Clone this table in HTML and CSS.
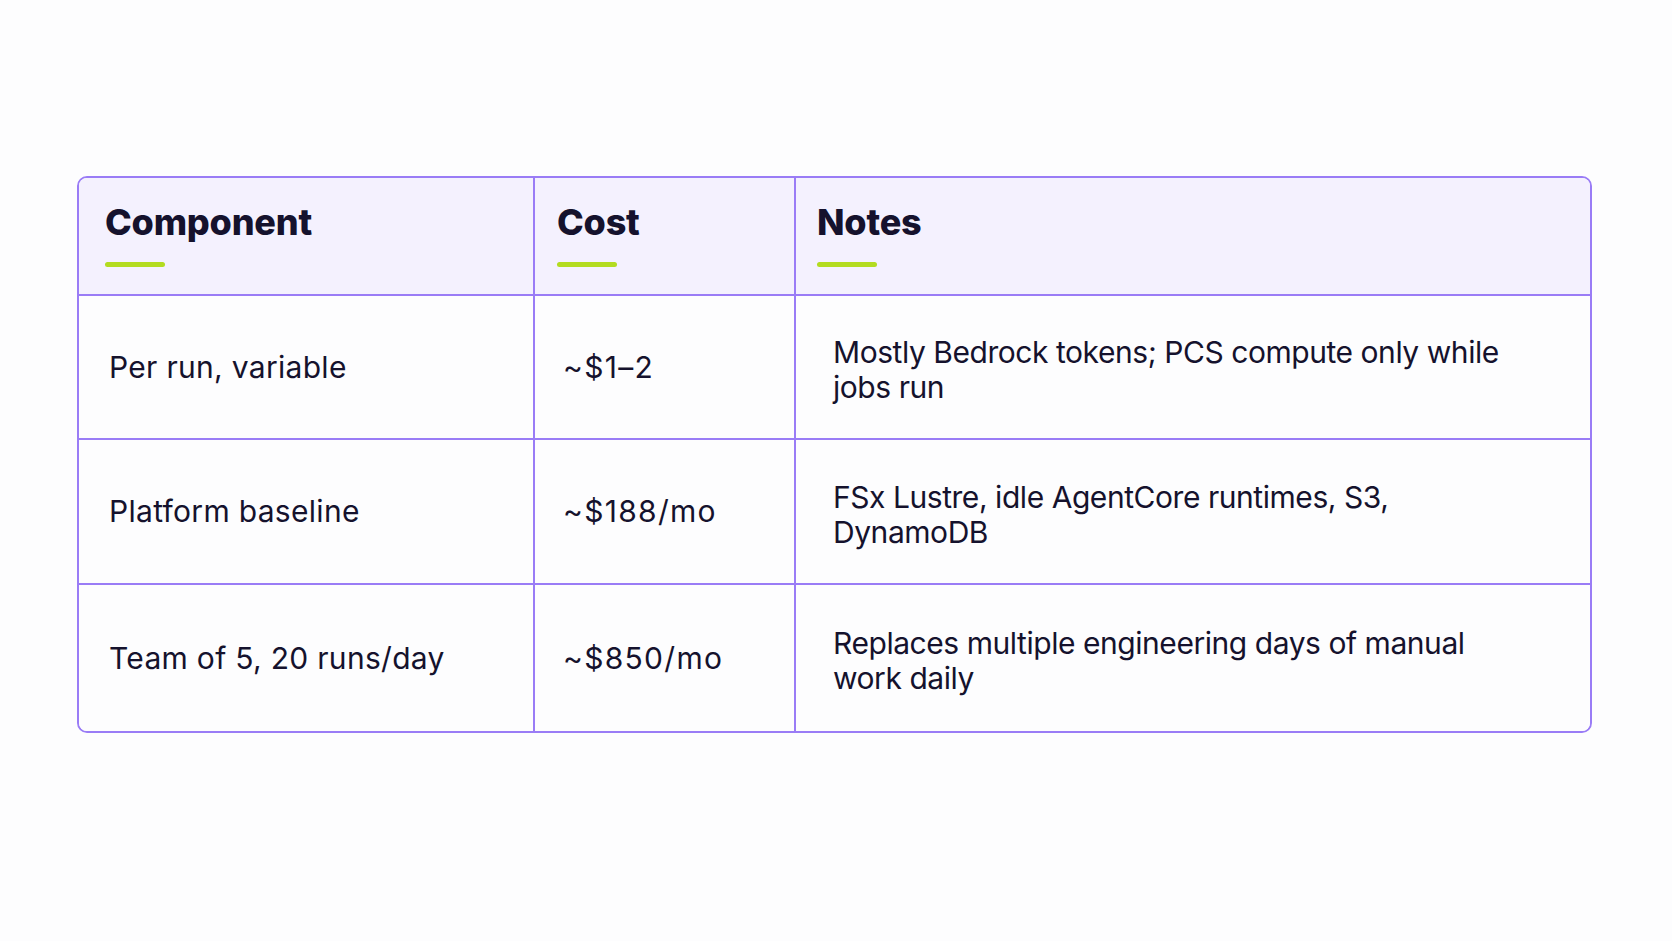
FILE: index.html
```html
<!DOCTYPE html>
<html lang="en">
<head>
<meta charset="utf-8">
<title>Cost table</title>
<link rel="stylesheet" href="styles.css">
</head>
<body>
<main class="page">
  <div class="table">
    <div class="cell head c1"><span class="head-text">Component</span><span class="bar"></span></div>
    <div class="cell head c2"><span class="head-text">Cost</span><span class="bar"></span></div>
    <div class="cell head c3 last"><span class="head-text">Notes</span><span class="bar"></span></div>

    <div class="cell body c1">Per run, variable</div>
    <div class="cell body c2">~$1–2</div>
    <div class="cell body c3 last notes">Mostly Bedrock tokens; PCS compute only while jobs run</div>

    <div class="cell body c1">Platform baseline</div>
    <div class="cell body c2">~$188/mo</div>
    <div class="cell body c3 last notes">FSx Lustre, idle AgentCore runtimes, S3, DynamoDB</div>

    <div class="cell body c1 bottom">Team of 5, 20 runs/day</div>
    <div class="cell body c2 bottom">~$850/mo</div>
    <div class="cell body c3 last bottom notes">Replaces multiple engineering days of manual work daily</div>
  </div>
</main>
</body>
</html>
```

FILE: styles.css
```css
* { box-sizing: border-box; }
html, body {
  margin: 0;
  padding: 0;
  background: #fdfdfe;
}
body {
  font-family: Inter, "Noto Sans", "Liberation Sans", sans-serif;
  color: #15122d;
}
.page {
  padding: 176px 80px 0 77px;
}
.table {
  width: 1515px;
  display: grid;
  grid-template-columns: 456px 261px 1fr;
  grid-template-rows: 118px 144px 145px 146px;
  border: 2px solid #9a7cf6;
  border-radius: 10px;
  overflow: hidden;
}
.cell {
  border-right: 2px solid #9a7cf6;
  border-bottom: 2px solid #9a7cf6;
}
.cell.last { border-right: none; }
.cell.bottom { border-bottom: none; }
.head {
  background: #f4f1fe;
  display: flex;
  flex-direction: column;
  align-items: flex-start;
  padding-top: 22px;
  padding-left: 22px;
}
.head.c1 { padding-left: 26px; }
.head.c3 { padding-left: 21px; }
.head-text {
  font-size: 36px;
  line-height: 44px;
  font-weight: 800;
  letter-spacing: -0.2px;
  color: #15122d;
}
.bar {
  display: block;
  width: 60px;
  height: 5px;
  margin-top: 18px;
  border-radius: 3px;
  background: #b3dc20;
}
.body {
  display: flex;
  align-items: center;
  font-size: 30px;
  line-height: 35px;
  font-weight: 400;
  background: #fdfdfe;
}
.body.c1 { padding-left: 30px; letter-spacing: 0.3px; }
.body.c2 { padding-left: 28px; letter-spacing: 1.3px; }
.body.c3 {
  padding-left: 37px;
  padding-right: 62px;
  padding-top: 6px;
  letter-spacing: -0.45px;
}
```
